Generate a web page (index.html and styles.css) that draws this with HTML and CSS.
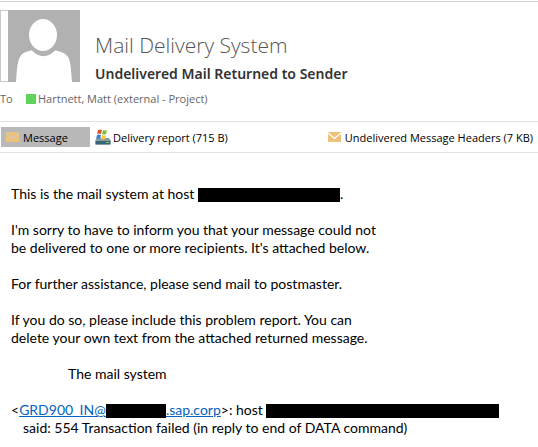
FILE: index.html
```html
<!DOCTYPE html>
<html lang="en">
<head>
    <meta charset="UTF-8">
    <meta name="viewport" content="width=device-width, initial-scale=1.0">
    <title>Undelivered Mail Returned to Sender</title>
    <link rel="stylesheet" href="styles.css">
</head>
<body>
    <header class="mail-header">
        <div class="avatar">
            <svg viewBox="0 0 72 72" width="72" height="72" aria-hidden="true">
                <rect width="72" height="72" fill="#b1b1b1"/>
                <ellipse cx="35" cy="25" rx="14" ry="16" fill="#fff"/>
                <path d="M8 72C9 60 9 52 12 47C14 43 19 41 24 40.500C31 48 40 48 47 40.500C52 41 57 43 60 47C63 52 63 60 64 72Z" fill="#fff"/>
            </svg>
        </div>
        <div class="titles">
            <h1>Mail Delivery System</h1>
            <h2>Undelivered Mail Returned to Sender</h2>
        </div>
    </header>

    <div class="recipient">
        <span class="to">To</span>
        <span class="presence"></span>
        <span>Hartnett, Matt (external - Project)</span>
    </div>

    <nav class="attachments">
        <button type="button" class="tab active">
            <svg viewBox="0 0 13 10" width="13" height="10" aria-hidden="true">
                <rect width="13" height="10" fill="#ecc17b"/>
                <path d="M0 1L6.500 6.500L13 1" fill="none" stroke="#d3cbbd" stroke-width="1.200"/>
            </svg>
            Message
        </button>
        <button type="button" class="tab report">
            <svg viewBox="0 0 16 16" width="16" height="16" aria-hidden="true">
                <path d="M2 9H14L16 12V15L15 16H1L0 15V12Z" fill="#8b9aa5"/>
                <path d="M1 12H15V15H1Z" fill="#3c6478"/>
                <rect x="11" y="13" width="3" height="1" fill="#6fe04b"/>
                <path d="M3 1Q5 0 7 1L6 5Q4 4 2 5Z" fill="#e2532d"/>
                <path d="M8 1Q10 2 12 1L11 5Q9 6 7 5Z" fill="#7fbf3a"/>
                <path d="M2 6Q4 5 6 6L5 10Q3 9 1 10Z" fill="#3f83cf"/>
                <path d="M7 6Q9 7 11 6L10 10Q8 11 6 10Z" fill="#f5c93a"/>
            </svg>
            Delivery report (715 B)
        </button>
        <button type="button" class="tab headers">
            <svg viewBox="0 0 13 10" width="13" height="10" aria-hidden="true">
                <rect width="13" height="10" fill="#ecc17b"/>
                <path d="M0 1L6.500 6.500L13 1" fill="none" stroke="#fff" stroke-width="1.200"/>
            </svg>
            Undelivered Message Headers (7 KB)
        </button>
    </nav>

    <main class="message">
        <p>This is the mail system at host <span class="redacted host"></span>.</p>
        <p>I'm sorry to have to inform you that your message could not<br>
        be delivered to one or more recipients. It's attached below.</p>
        <p>For further assistance, please send mail to postmaster.</p>
        <p>If you do so, please include this problem report. You can<br>
        delete your own text from the attached returned message.</p>
        <p class="signature">The mail system</p>
        <p>&lt;<a href="#">GRD900_IN@<span class="redacted domain"></span>.sap.corp</a>&gt;: host <span class="redacted server"></span><br>
        <span class="reply">said: 554 Transaction failed (in reply to end of DATA command)</span></p>
    </main>
</body>
</html>
```
FILE: styles.css
```css
body {
    margin: 0;
    padding-top: 1px;
    background-color: #fff;
    font-family: "Open Sans", sans-serif;
}

.mail-header {
    display: flex;
    align-items: flex-start;
    gap: 15px;
    padding-top: 8px;
    border-top: 1px solid #d0d4d4;
}

.avatar {
    display: flex;
    padding-left: 7px;
    border-left: 1px solid #c8c8c8;
    box-shadow: inset 0 1px #c8c8c8, inset 0 -1px #c8c8c8;
}

.titles {
    padding-top: 20px;
}

h1, h2 {
    margin: 0;
    white-space: nowrap;
}

h1 {
    color: #555;
    font-size: 21px;
    font-weight: 300;
    line-height: 30px;
}

h2 {
    color: #333;
    font-family: "Noto Sans", sans-serif;
    font-size: 14px;
    font-weight: 600;
    line-height: 28px;
}

.recipient {
    display: flex;
    align-items: center;
    margin-top: 2px;
    color: #666;
    font-size: 11px;
    line-height: 18px;
}

.to {
    width: 26px;
}

.presence {
    width: 10px;
    height: 10px;
    margin-right: 2px;
    background-color: #5fd35a;
}

.attachments {
    display: flex;
    margin-top: 13px;
    padding: 5px 0 5px 1px;
    border-top: 1px solid #e1e1e1;
    border-bottom: 1px solid #e1e1e1;
}

.tab {
    display: flex;
    align-items: center;
    gap: 4px;
    height: 20px;
    padding: 0 5px;
    border: none;
    background: none;
    color: #000;
    font-family: "Open Sans", sans-serif;
    font-size: 11px;
    white-space: nowrap;
    cursor: pointer;
}

.tab.active {
    width: 89px;
    background-color: #b9b9b9;
}

.tab.report {
    gap: 2px;
}

.tab.headers {
    margin-left: auto;
}

.message {
    padding: 32px 11px 8px;
    color: #000;
    font-family: "Lato", sans-serif;
    font-size: 14px;
    line-height: 18px;
}

.message p {
    margin: 0 0 18px;
    white-space: nowrap;
}

.message p:last-child {
    margin-bottom: 0;
}

.message a {
    color: #0563c1;
}

.message .signature {
    padding-left: 57px;
}

.reply {
    padding-left: 12px;
}

.redacted {
    display: inline-block;
    height: 14px;
    background-color: #000;
    vertical-align: middle;
}

.host {
    width: 142px;
}

.domain {
    width: 60px;
}

.server {
    width: 233px;
}
```
